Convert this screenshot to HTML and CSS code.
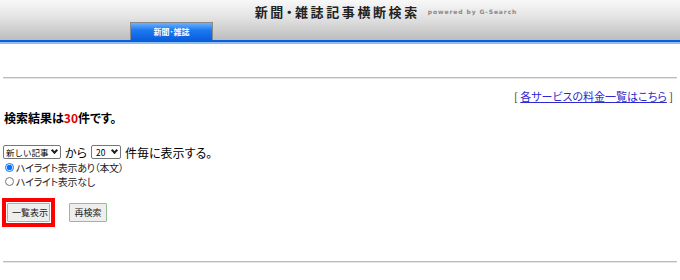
FILE: index.html
```html
<!DOCTYPE html>
<html lang="ja">
<head>
  <meta charset="UTF-8">
  <title>新聞・雑誌記事横断検索</title>
  <link rel="stylesheet" href="styles.css">
</head>
<body>
  <!-- Top Bar -->
  <header class="top-bar">
    <div class="title-row">
      <span class="site-title">新聞・雑誌記事横断検索</span>
      <span class="powered">powered by G-Search</span>
    </div>
    <div class="tab-row">
      <div class="tab">新聞･雑誌</div>
    </div>
  </header>
  <div class="blue-line"></div>

  <div class="content">
    <hr class="rule">
    <div class="price-link">[ <a href="#">各サービスの料金一覧はこちら</a> ]</div>

    <p class="result">検索結果は<span class="count">30</span>件です。</p>

    <form class="options">
      <div class="sort-row">
        <span class="select-wrap sort"><select><option>新しい記事</option></select></span>
        <span>から</span>
        <span class="select-wrap num"><select><option>20</option></select></span>
        <span>件毎に表示する。</span>
      </div>
      <label class="radio"><input type="radio" name="hl" checked>ハイライト表示あり（本文）</label>
      <label class="radio"><input type="radio" name="hl">ハイライト表示なし</label>

      <div class="buttons">
        <div class="highlight-box"><button type="button" class="btn btn-list">一覧表示</button></div>
        <button type="button" class="btn btn-research">再検索</button>
      </div>
    </form>

    <hr class="rule bottom">
  </div>
</body>
</html>
```

FILE: styles.css
```css
body {
  margin: 0;
  font-family: "Noto Sans CJK JP", "Liberation Sans", sans-serif;
  font-size: 11px;
  color: #000;
  background: #fff;
  font-feature-settings: "palt";
}

/* Top Bar */
.top-bar {
  height: 40px;
  background: linear-gradient(#f8f8f8, #e2e2e2 45%, #bdbdbd);
}

.title-row {
  height: 22px;
  display: flex;
  justify-content: center;
  align-items: center;
  padding-left: 92px;
}

.site-title {
  font-size: 13px;
  font-weight: bold;
  letter-spacing: 2.6px;
  color: #222;
}

.powered {
  font-family: "DejaVu Sans", sans-serif;
  font-size: 6px;
  font-weight: bold;
  color: #888;
  margin-left: 8px;
  letter-spacing: 0.9px;
}

.tab-row {
  height: 18px;
  padding-left: 130px;
  display: flex;
  align-items: flex-end;
}

.tab {
  width: 83px;
  height: 18px;
  background: linear-gradient(#6fb0ff, #1e7bf0 40%, #0a5ee0);
  border: 1px solid #8a8a8a;
  border-bottom: none;
  box-sizing: border-box;
  color: #fff;
  font-size: 8px;
  font-weight: bold;
  text-align: center;
  line-height: 17px;
}

.blue-line {
  height: 2px;
  background: #0b5ed8;
  border-bottom: 2px solid #8cc0f5;
}

.content {
  padding: 0 3px;
}

.rule {
  margin: 33px 0 0;
  border: none;
  border-top: 1px solid #bdbdbd;
  border-bottom: 1px solid #e4e4e4;
}

.price-link {
  text-align: right;
  margin-top: 9px;
  padding-right: 4px;
  color: #333;
}

.price-link a {
  color: #2b2bd0;
}

.result {
  font-size: 12px;
  font-weight: bold;
  margin: 5px 0 0 1px;
}

.count {
  color: #e00000;
}

.options {
  margin-top: 18px;
}

.sort-row {
  display: flex;
  align-items: center;
  gap: 4px;
  height: 16px;
  font-size: 12px;
}

/* select with drawn chevron */
.select-wrap {
  position: relative;
  display: inline-block;
  height: 14px;
}

.select-wrap select {
  appearance: none;
  -webkit-appearance: none;
  font-family: inherit;
  font-size: 8.5px;
  height: 14px;
  padding: 0 0 0 2px;
  border: 1px solid #767676;
  border-radius: 2px;
  background: #fff;
  color: #000;
  box-sizing: border-box;
  display: block;
}

.select-wrap::after {
  content: "";
  position: absolute;
  right: 4px;
  top: 3px;
  width: 3px;
  height: 3px;
  border-right: 2px solid #222;
  border-bottom: 2px solid #222;
  transform: rotate(45deg);
  pointer-events: none;
}

.sort select {
  width: 58px;
}

.num select {
  width: 30px;
  padding-left: 4px;
}

.radio {
  display: flex;
  align-items: center;
  height: 14px;
  font-size: 10px;
  letter-spacing: -0.3px;
  color: #222;
}

.radio input {
  margin: 0 2px;
  width: 9px;
  height: 9px;
}

.buttons {
  display: flex;
  align-items: center;
  gap: 14px;
  margin-top: 10px;
}

.highlight-box {
  border: 4px solid #f00;
  padding: 1px;
  margin-left: -1px;
  display: flex;
}

.btn {
  font-family: inherit;
  font-size: 9px;
  height: 19px;
  padding: 0 4px;
  background: #eeeeee;
  border-radius: 1px;
  color: #222;
  white-space: nowrap;
}

.btn-list {
  width: 43px;
  border: 1px solid #c8a98a;
}

.btn-research {
  width: 38px;
  border: 1px solid #8fc08f;
}

.bottom {
  margin-top: 34px;
}
```
